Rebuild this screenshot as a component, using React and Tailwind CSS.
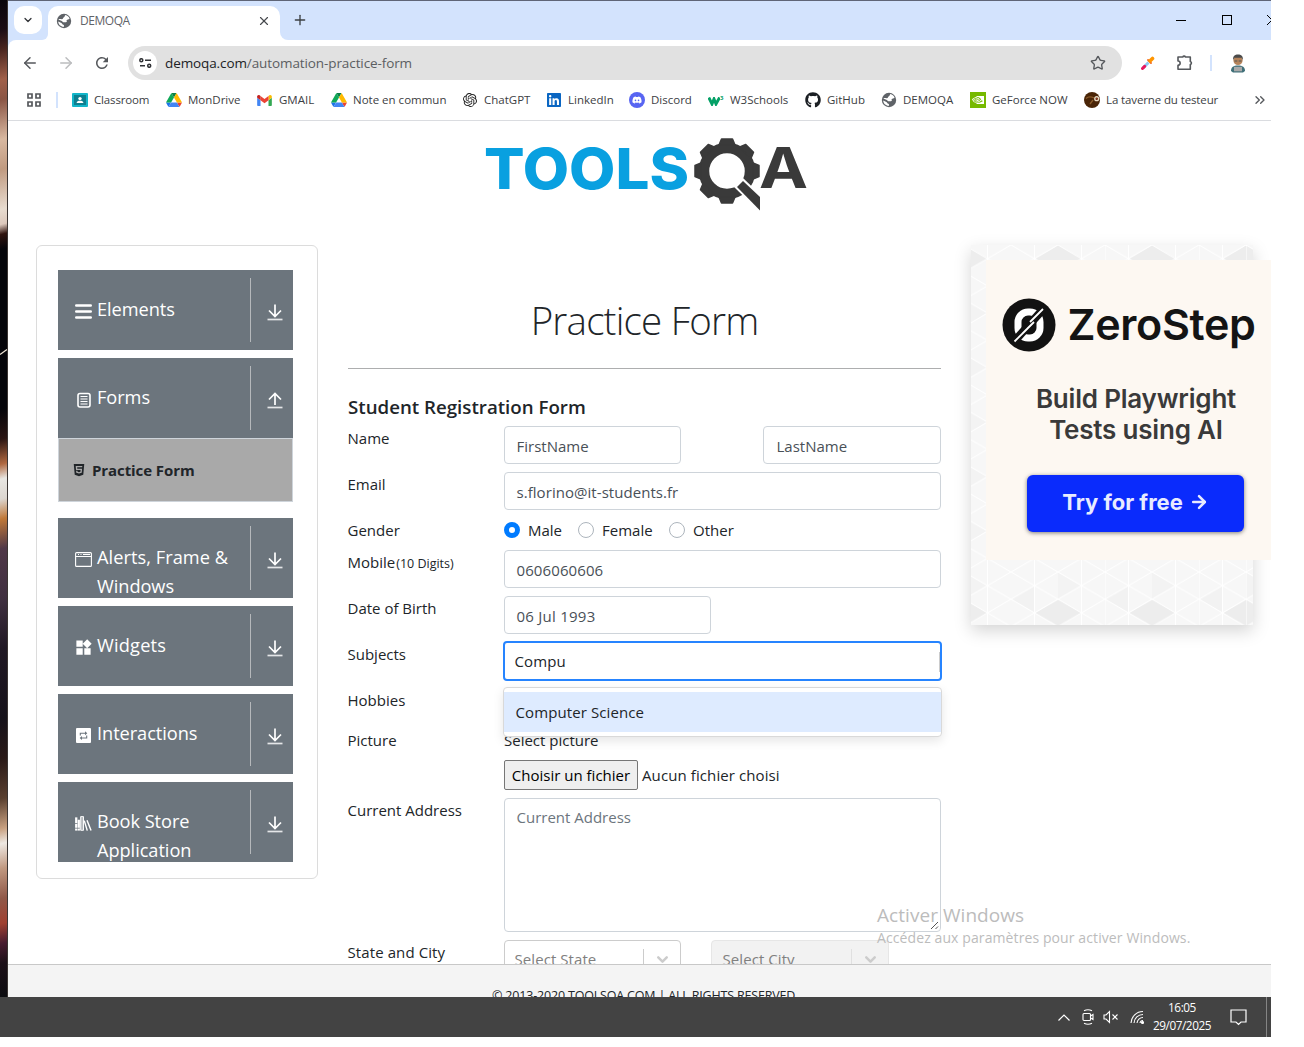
import React from "react";
import { ArrowLeft, ArrowRight, ChevronDown, ChevronsRight, Plus, X, Star } from "lucide-react";
import { MdPublic, MdWidgets, MdRefresh } from "react-icons/md";
import { FaLinkedin, FaDiscord, FaGithub, FaHtml5 } from "react-icons/fa";
import { SiNvidia, SiOpenai } from "react-icons/si";

function DriveIcon() {
  return (
    <svg width="16" height="14" viewBox="0 0 87.3 78">
      <path fill="#1a73e8" d="M6.6 66.85 10.45 73.5c.8 1.4 1.95 2.5 3.3 3.3L27.5 53H0c0 1.55.4 3.1 1.2 4.5z" />
      <path fill="#0fa958" d="M43.65 25 29.9 1.2c-1.35.8-2.5 1.9-3.3 3.3L1.2 48.5A9 9 0 0 0 0 53h27.5z" />
      <path fill="#ea4335" d="M73.55 76.8c1.35-.8 2.5-1.9 3.3-3.3l9.25-16c.8-1.4 1.2-2.95 1.2-4.5H59.8l5.85 11.5z" />
      <path fill="#0b8043" d="M43.65 25 57.4 1.2C56.05.4 54.5 0 52.9 0H34.4c-1.6 0-3.15.45-4.5 1.2z" />
      <path fill="#4285f4" d="M59.8 53H27.5L13.75 76.8c1.35.8 2.9 1.2 4.5 1.2h50.8c1.6 0 3.15-.45 4.5-1.2z" />
      <path fill="#ffba00" d="M73.4 26.5 60.7 4.5c-.8-1.4-1.95-2.5-3.3-3.3L43.65 25 59.8 53h27.45c0-1.55-.4-3.1-1.2-4.5z" />
    </svg>
  );
}

function GmailIcon() {
  return (
    <svg width="15" height="11" viewBox="52 42 88 66">
      <path fill="#4285f4" d="M58 108h14V74L52 59v43c0 3.32 2.69 6 6 6" />
      <path fill="#34a853" d="M120 108h14c3.32 0 6-2.69 6-6V59l-20 15" />
      <path fill="#fbbc04" d="M120 48v26l20-15v-8c0-7.42-8.47-11.65-14.4-7.2" />
      <path fill="#ea4335" d="M72 74V48l24 18 24-18v26L96 92" />
      <path fill="#c5221f" d="M52 51v8l20 15V48l-5.6-4.2c-5.94-4.45-14.4-.22-14.4 7.2" />
    </svg>
  );
}

function ClassroomIcon() {
  return (
    <svg width="16" height="14" viewBox="0 0 16 14">
      <rect width="16" height="14" rx="1" fill="#12b5c9" />
      <rect x="2" y="2" width="12" height="10" fill="#0c7f90" />
      <circle cx="8" cy="5.6" r="1.7" fill="#fff" />
      <path d="M4.6 10c0-1.7 1.6-2.2 3.4-2.2s3.4.5 3.4 2.2z" fill="#fff" />
    </svg>
  );
}

function W3Icon() {
  return (
    <span className="flex w-4 items-start text-[#04a066]">
      <svg width="12" height="9" viewBox="0 0 12 9" className="mt-0.5 shrink-0" fill="none" stroke="#04a066" strokeWidth="2.9">
        <path d="M.8.5 4 7l2-5 2 5L11.6.5" />
      </svg>
      <span className="text-[6px] leading-[6px] font-bold">3</span>
    </span>
  );
}

function TavernIcon() {
  return (
    <svg width="16" height="16" viewBox="0 0 16 16">
      <circle cx="8" cy="8" r="8" fill="#4a2507" />
      <path d="M2 6.5c2-2 5-2 8-.6M6 12l3-4" stroke="#8a5a2a" strokeWidth="1.3" fill="none" />
      <circle cx="12.7" cy="6.7" r="1.9" fill="none" stroke="#e9d8c0" strokeWidth="1.4" />
      <circle cx="12.7" cy="6.7" r=".7" fill="#b03020" />
    </svg>
  );
}

function GlobeIcon() {
  return (
    <svg width="16" height="16" viewBox="0 0 16 16">
      <circle cx="8" cy="8" r="7.200" fill="#5f6368" />
      <path d="M9.300 2.100c2 .3 3.600 1.600 4.300 3.500-.9 1.300-2.700 1-3.200 2 .8.700.6 1.700-.6 1.700H7.900c-.8 0-1.300-.7-2-1.400L2.300 6.600c.7-.6 2-.6 3.400-.4 1.500.2 1-1.400 2.200-1.900 1.100-.4.6-1.400 1.400-2.200z" fill="#fff" />
      <path d="M2.200 8.600 5.400 10c.9.400.8 1.500 1.900 1.700.9.200.8 1.200.4 2.200C4.700 13.800 2.300 11.500 2.200 8.600z" fill="#fff" />
    </svg>
  );
}

const bookmarks = [
  { label: "Classroom", w: "w-[94px]", t: "tracking-[-0.16px]", icon: <ClassroomIcon /> },
  { label: "MonDrive", w: "w-[91px]", t: "", icon: <DriveIcon /> },
  { label: "GMAIL", w: "w-[74px]", t: "", icon: <GmailIcon /> },
  { label: "Note en commun", w: "w-[131px]", t: "", icon: <DriveIcon /> },
  { label: "ChatGPT", w: "w-[84px]", t: "", icon: <SiOpenai className="ml-px size-[14px] text-[#222]" /> },
  { label: "LinkedIn", w: "w-[83px]", t: "", icon: <FaLinkedin className="size-4 text-[#0a66c2]" /> },
  { label: "Discord", w: "w-[79px]", t: "", icon: <span className="flex size-4 items-center justify-center rounded-full bg-[#5865f2]"><FaDiscord className="size-[10px] text-white" /></span> },
  { label: "W3Schools", w: "w-[97px]", t: "", icon: <W3Icon /> },
  { label: "GitHub", w: "w-[76px]", t: "", icon: <FaGithub className="size-4 text-[#1b1f24]" /> },
  { label: "DEMOQA", w: "w-[89px]", t: "", icon: <GlobeIcon /> },
  { label: "GeForce NOW", w: "w-[114px]", t: "", icon: <span className="flex size-4 items-center justify-center bg-[#76b900]"><SiNvidia className="size-3 text-white" /></span> },
  { label: "La taverne du testeur", w: "w-[168px]", t: "tracking-[-0.12px]", icon: <TavernIcon /> },
];

function BrowserChrome() {
  return (
    <div className="shrink-0 border-b border-[#dadce0] bg-[#d3e3fd]">
      <div className="h-px bg-[#5f6577]" />
      <div className="flex h-[39px] items-end">
        <div className="mb-1.5 ml-1.5 flex size-7 items-center justify-center rounded-[10px] bg-white">
          <ChevronDown className="size-3 text-[#303236]" strokeWidth={2.5} />
        </div>
        <div className="h-2 w-1.5 bg-white"><div className="size-full rounded-br-lg bg-[#d3e3fd]" /></div>
        <div className="flex h-[34px] w-[232px] items-center rounded-t-[10px] bg-white pb-[5px] pl-2 pr-[9px]">
          <GlobeIcon />
          <span className="ml-2 flex-1 text-[12px] tracking-[-0.45px] text-[#5f6368]">DEMOQA</span>
          <X className="size-3.5 text-[#474a4e]" />
        </div>
        <div className="h-2 w-2 bg-white"><div className="size-full rounded-bl-lg bg-[#d3e3fd]" /></div>
        <div className="mb-3 ml-1 flex-1"><Plus className="size-4 text-[#3c4043]" /></div>
        <div className="flex h-[39px] w-[95px] shrink-0 items-center overflow-hidden pb-px">
          <div className="h-px w-2.5 shrink-0 bg-black" />
          <div className="ml-9 size-2.5 shrink-0 border border-black" />
          <svg width="10" height="10" viewBox="0 0 10 10" className="ml-[35px] shrink-0" stroke="#000" strokeWidth="1"><path d="M0 0l10 10M10 0L0 10" /></svg>
        </div>
      </div>
      <div className="flex h-[46px] items-center rounded-tl-lg bg-white">
        <ArrowLeft className="ml-[13px] size-[18px] text-[#55585c]" />
        <ArrowRight className="ml-[18px] size-[18px] text-[#bcbdbf]" />
        <MdRefresh className="ml-[18px] size-[18px] text-[#55585c]" />
        <div className="ml-[17px] flex h-[34px] w-[994px] items-center rounded-full bg-[#e1e1e1] pl-[5px] pr-4">
          <span className="flex size-6 items-center justify-center rounded-full bg-white">
            <svg width="13" height="10" viewBox="0 0 13 10" fill="none" stroke="#303236" strokeWidth="1.5">
              <circle cx="2.3" cy="2.2" r="1.5" /><path d="M6 2.2h6M1 7.8h5" /><circle cx="10.2" cy="7.8" r="1.5" />
            </svg>
          </span>
          <span className="ml-2 flex-1 text-[13.5px] tracking-[-0.1px] text-[#5b5e62]"><span className="text-[#202124]">demoqa.com</span>/automation-practice-form</span>
          <Star className="size-4 text-[#55585c]" />
        </div>
        <svg width="14" height="14" viewBox="0 0 14 14" className="ml-[19px]">
          <path d="M2 12 7.5 6.5" stroke="#8fc8f2" strokeWidth="3" />
          <path d="M1.5 12.5 3.6 10.4" stroke="#e8175d" strokeWidth="3" strokeLinecap="round" />
          <path d="M7 4l3 3" stroke="#f0641e" strokeWidth="1.8" strokeLinecap="round" />
          <path d="M9.2 4.8l2.3-2.3" stroke="#ff9500" strokeWidth="3.6" strokeLinecap="round" />
        </svg>
        <svg width="18" height="18" viewBox="0 0 18 18" className="ml-[21px]" fill="none" stroke="#55585c" strokeWidth="1.6">
          <path d="M2 3h4.800a1.400 1.400 0 0 1 2.600 0h4.900v4.600a1.500 1.500 0 0 1 0 2.900v4.700H2v-3.900a2 2 0 0 0 0-4.300z" strokeLinejoin="round" />
        </svg>
        <div className="ml-4 h-4 w-0.5 bg-[#d3e3fd]" />
        <svg width="16" height="19" viewBox="0 0 16 19" className="ml-[18px]">
          <path d="M1 17c0-4 2.500-5.500 7-5.500s7 1.500 7 5.500l-2 1.500H3z" fill="#3f6f78" />
          <circle cx="8" cy="6.500" r="4.600" fill="#b5835a" />
          <path d="M3.300 6C2.500 2 5 .5 8 .5S13.500 2 12.700 6l-1.200-2.300h-7z" fill="#4a4a4a" />
          <path d="M4.500 7h2.800m1.400 0h2.800" stroke="#555" />
          <rect x="4" y="12.800" width="8" height="4.500" fill="#a9a9a9" />
        </svg>
      </div>
      <div className="flex h-[34px] items-center bg-white pb-1.5 text-[11.5px] text-[#3c4043]">
        <svg width="14" height="14" viewBox="0 0 14 14" className="ml-[19px]" fill="none" stroke="#55585c" strokeWidth="1.7">
          <path d="M1 1h4v4H1zM9 1h4v4H9zM1 9h4v4H1zM9 9h4v4H9z" />
        </svg>
        <div className="ml-[15px] mr-[14px] h-4 w-0.5 bg-[#d3e3fd]" />
        {bookmarks.map((b) => (
          <div key={b.label} className={"flex shrink-0 items-center whitespace-nowrap " + b.w}>
            <span className="flex w-[22px] shrink-0">{b.icon}</span>
            <span className={b.t}>{b.label}</span>
          </div>
        ))}
        <ChevronsRight className="size-4 text-[#55585c]" />
      </div>
    </div>
  );
}

function Logo() {
  const teeth = [0, 45, 90, 180, 225, 270, 315];
  return (
    <svg width="340" height="90" viewBox="0 0 340 90" className="ml-[470px] mt-3 block">
      <text x="6" y="55.500" fontFamily="Inter, sans-serif" fontWeight="800" fontSize="57" fill="#09a0e0" textLength="205" lengthAdjust="spacingAndGlyphs">TOOLS</text>
      <g transform="translate(249 38)">
        <circle r="23" fill="none" stroke="#3a3a3a" strokeWidth="10.500" />
        {teeth.map((a) => (
          <path key={a} d="M-8-26-5.500-32H5.500L8-26z" fill="#3a3a3a" stroke="#3a3a3a" strokeWidth="1.500" strokeLinejoin="round" transform={`rotate(${a})`} />
        ))}
        <path d="M7 16 16 7 40 30V48z" fill="#fff" />
        <path d="M10 16 16 10 33 26V39.500z" fill="#3a3a3a" />
      </g>
      <text x="281" y="55" fontFamily="Inter, sans-serif" fontWeight="700" fontSize="57" fill="#3a3a3a" textLength="49" lengthAdjust="spacingAndGlyphs">A</text>
    </svg>
  );
}

function BarsIcon() {
  return (
    <svg width="17" height="15" viewBox="0 0 17 15" stroke="#fff" strokeWidth="2.600" strokeLinecap="round">
      <path d="M1.300 1.500h14.400M1.300 7.500h14.400M1.300 13.500h14.400" />
    </svg>
  );
}

function FormsIcon() {
  return (
    <svg width="14" height="16" viewBox="0 0 14 16" fill="none" stroke="#fff">
      <rect x="1" y="1.500" width="12" height="13.500" rx="2" strokeWidth="1.600" />
      <path d="M3.500 4.500h7M3.500 7h7M3.500 9.500h7M3.500 12h7" strokeWidth="1.200" />
    </svg>
  );
}

function WindowIcon() {
  return (
    <svg width="17" height="15" viewBox="0 0 17 15" fill="none" stroke="#fff">
      <rect x=".6" y=".6" width="15.800" height="13.800" rx="1" strokeWidth="1.100" />
      <path d="M1 4.500h15M3 2.500h1M5.500 2.500h1M8 2.500h7" strokeWidth="1.200" />
    </svg>
  );
}

function RepeatBoxIcon() {
  return (
    <svg width="15" height="15" viewBox="0 0 15 15">
      <rect width="15" height="15" rx="1" fill="#fff" />
      <path d="M4.300 7.500V5.300H9.500M10.700 7.500v2.500H5.500" fill="none" stroke="#6c757d" strokeWidth="1.100" />
      <path d="M9 3.300l2.300 2L9 7.300zM6 8v4L3.700 10z" fill="#6c757d" />
    </svg>
  );
}

function BooksIcon() {
  return (
    <svg width="18" height="17" viewBox="0 0 18 17" fill="none" stroke="#fff">
      <path d="M1.300 2v14" strokeWidth="2.400" />
      <path d="M4 4.500v11.500" strokeWidth="2.400" />
      <path d="M6 1.200h3v14.500H6z" fill="#fff" fillOpacity=".5" strokeWidth="1" />
      <path d="M9.800 5.500 13 16M12.700 5 17 16" strokeWidth="1.500" />
      <path d="M0 13.500h5M0 8.500h2.500" stroke="#6c757d" strokeWidth=".8" />
    </svg>
  );
}

function MenuItem({ icon, children, open }) {
  return (
    <div className="flex h-20 overflow-hidden bg-[#6c757d] py-2 text-white">
      <div className="flex w-[192px] shrink-0 pl-[17px] pt-[17px]">
        <span className="flex h-[30px] w-[17px] shrink-0 items-center justify-center pt-[3px]">{icon}</span>
        <span className="ml-[5px] whitespace-nowrap text-[18.200px] leading-[29px] tracking-[-0.05px]">{children}</span>
      </div>
      <div className="flex h-16 flex-1 items-center justify-center border-l border-[#b5b8bb] pl-1.5 pt-1">
        <svg width="16" height="17" viewBox="0 0 16 17" fill="none" stroke="#fff" strokeWidth="1.700">
          <path d={open ? "M8 13V2M2 7.500l6-6 6 6" : "M8 .5V12M2 6.500l6 6 6-6"} />
          <path d="M.5 15.500h15" stroke="#e4e6e8" />
        </svg>
      </div>
    </div>
  );
}

function Sidebar() {
  return (
    <div className="h-[634px] w-[282px] shrink-0 rounded-md border border-[#dcdcdc] pl-[21px] pr-6 pt-6">
      <div className="flex flex-col gap-2">
        <MenuItem icon={<BarsIcon />}>Elements</MenuItem>
        <div className="pb-2">
          <MenuItem open icon={<FormsIcon />}>Forms</MenuItem>
          <div className="flex h-16 items-center border border-[#ced4da] bg-[#a9a9a9] pl-[13px] text-[15px] font-bold text-[#212529]">
            <FaHtml5 className="mr-1.5 size-[14px]" />
            <span className="tracking-[-0.08px]">Practice Form</span>
          </div>
        </div>
        <MenuItem icon={<WindowIcon />}><span className="tracking-[0.05px]">Alerts, Frame &amp;</span><br />Windows</MenuItem>
        <MenuItem icon={<MdWidgets className="size-[19px] shrink-0" />}><span className="tracking-[0.2px]">Widgets</span></MenuItem>
        <MenuItem icon={<RepeatBoxIcon />}>Interactions</MenuItem>
        <MenuItem icon={<BooksIcon />}>Book Store<br />Application</MenuItem>
      </div>
    </div>
  );
}

function Row({ label, h, children }) {
  return (
    <div className={"flex shrink-0 " + h}>
      <div className="-ml-[0.5px] w-[156.5px] shrink-0 leading-6">{label}</div>
      {children}
    </div>
  );
}

function Field({ w, children }) {
  return (
    <div className={"flex h-[38px] shrink-0 items-center rounded border border-[#ced4da] bg-white pl-[11.500px] pt-[3px] text-[#495057] " + w}>{children}</div>
  );
}

function Radio({ checked, children, className }) {
  return (
    <div className={"flex h-6 items-center " + className}>
      {checked
        ? <span className="size-4 rounded-full border-[5px] border-[#007bff] bg-white" />
        : <span className="size-4 rounded-full border border-[#adb5bd] bg-white" />}
      <span className="ml-2">{children}</span>
    </div>
  );
}

function SelectBox({ children, disabled }) {
  return (
    <div className={disabled
      ? "flex h-[38px] w-[178px] items-center rounded border border-[#e6e6e6] bg-[#f2f2f2] pl-[10.500px] text-[#808080]"
      : "flex h-[38px] w-[177px] items-center rounded border border-[#ccc] bg-white pl-[9.500px] text-[#808080]"}>
      <span className="flex-1 tracking-[0.07px]">{children}</span>
      <span className={disabled ? "h-5 w-px bg-[#e0e0e0]" : "h-5 w-px bg-[#ccc]"} />
      <span className="flex w-9 justify-center"><ChevronDown className="size-[17px] text-[#ccc]" strokeWidth={3.5} /></span>
    </div>
  );
}

function RegistrationForm() {
  return (
    <div className="ml-[30px] w-[593px] shrink-0 text-[15px] text-[#212529]">
      <h1 className="h-[124px] border-b border-[#adaeaf] pt-[47px] text-center text-[38.500px] leading-[56px] font-light tracking-[-0.8px]">Practice Form</h1>
      <h5 className="mb-[7px] mt-[26px] text-[18.700px] leading-6 font-semibold">Student Registration Form</h5>
      <Row label="Name" h="h-[46px]">
        <Field w="w-[177px]">FirstName</Field>
        <div className="w-[82px] shrink-0" />
        <Field w="w-[178px]"><span className="pl-px">LastName</span></Field>
      </Row>
      <Row label="Email" h="h-[46px]"><Field w="w-[437px]"><span className="tracking-[0.05px]">s.florino@it-students.fr</span></Field></Row>
      <Row label="Gender" h="h-8">
        <Radio checked className="w-[74px]">Male</Radio>
        <Radio className="w-[91px]">Female</Radio>
        <Radio>Other</Radio>
      </Row>
      <Row label={<>Mobile<span className="ml-px text-[12.500px]">(10 Digits)</span></>} h="h-[46px]"><Field w="w-[437px]"><span className="tracking-[0.1px]">0606060606</span></Field></Row>
      <Row label="Date of Birth" h="h-[46px]"><Field w="w-[207px]"><span className="tracking-[0.25px]">06 Jul 1993</span></Field></Row>
      <Row label="Subjects" h="h-[46px]">
        <div className="relative -ml-px -mt-px flex h-10 w-[439px] shrink-0 items-center rounded border-2 border-[#2684ff] pl-[9.500px] pt-px">
          <span className="flex-1 tracking-[0.1px]">Compu</span>
          <span className="h-5 w-px bg-[#ccc]" />
          <div className="absolute -left-0.5 top-[44px] z-10 flex h-[50px] w-[439px] items-center rounded border border-[#d9d9d9] bg-white shadow-[0_4px_11px_rgba(0,0,0,0.1)]">
            <div className="flex h-10 w-full items-center bg-[#deebff] pl-[11.500px] pt-px tracking-[0.1px]">Computer Science</div>
          </div>
        </div>
      </Row>
      <Row label="Hobbies" h="h-10" />
      <Row label="Picture" h="h-[70px]">
        <div>
          <div className="mb-2 leading-6">Select picture</div>
          <div className="flex items-center">
            <button className="h-[30px] w-[134px] whitespace-nowrap rounded-[2px] border border-[#767676] bg-[#efefef] text-black">Choisir un fichier</button>
            <span className="ml-1 tracking-[0.1px]">Aucun fichier choisi</span>
          </div>
        </div>
      </Row>
      <Row label="Current Address" h="h-[142px]">
        <div className="flex h-[134px] w-[437px] shrink-0 justify-between rounded border border-[#ced4da] pl-[11.500px] pt-1.5 leading-6 text-[#6c757d]">
          Current Address
          <svg width="9" height="9" viewBox="0 0 9 9" className="mb-px mr-px self-end" stroke="#555"><path d="M1 8l7-7M5.500 8 8 5.500" /></svg>
        </div>
      </Row>
      <Row label={<span className="tracking-[0.1px]">State and City</span>} h="h-[38px]">
        <SelectBox>Select State</SelectBox>
        <div className="w-[30px]" />
        <SelectBox disabled>Select City</SelectBox>
      </Row>
    </div>
  );
}

function TrianglePattern() {
  const cells = [0, 94, 188, 282];
  const rows = [0, 54.5, 109, 163.5, 218, 272.5, 327];
  return (
    <svg width="282" height="380" viewBox="0 0 282 380" className="absolute inset-0">
      <defs>
        <pattern id="tri" width="47" height="27.25" patternUnits="userSpaceOnUse" x="-7">
          <path d="M0 0v27.25M23.500 0v27.250M0 0 47 27.250M47 0 0 27.250" stroke="#fff" strokeWidth="1" />
        </pattern>
      </defs>
      <rect width="282" height="380" fill="#f7f7f7" />
      {rows.map((y, j) => cells.map((x) => (
        <g key={x + "-" + y}>
          <path d={`M${x - 7} ${y} l23.500 13.600 -23.500 13.600z`} fill="#f3f3f3" />
          <path d={`M${x + 40} ${y + 27.250} l23.500-13.600v27.200z`} fill={j % 2 ? "#f5f5f5" : "#f2f2f2"} />
        </g>
      )))}
      {cells.map((x) => (
        <g key={x} fill="#ededed">
          <path d={`M${x - 30} 13.600 l23.500-13.600 23.500 13.600 -23.500 13.600z`} />
          <path d={`M${x - 30} 368 l23.500-13.600 23.500 13.600 -23.500 13.600z`} />
        </g>
      ))}
      <rect width="282" height="380" fill="url(#tri)" />
    </svg>
  );
}

function ZeroStepAd() {
  return (
    <div className="relative ml-[30px] h-[380px] w-[282px] shrink-0 shadow-[0_6px_16px_rgba(0,0,0,0.17)]">
      <TrianglePattern />
      <div className="relative ml-[15px] mt-[15px] h-[300px] w-[300px] bg-[#fdf8f2] pt-[38px] font-['Inter']">
        <div className="ml-4 flex items-center">
          <svg width="54" height="54" viewBox="0 0 54 54">
            <circle cx="27" cy="27" r="26.500" fill="#121212" />
            <rect x="16" y="14" width="22" height="26" rx="10" fill="none" stroke="#fff" strokeWidth="7" />
            <path d="M10 46 44 8" stroke="#121212" strokeWidth="8" />
            <path d="M12.500 43.500 26 30M28 24 41 11M20 36l12-12" stroke="#fff" strokeWidth="1.800" />
          </svg>
          <span className="ml-[11.500px] whitespace-nowrap pb-0.5 text-[43px] leading-[52px] font-semibold tracking-[-0.35px] text-[#141414]">ZeroStep</span>
        </div>
        <div className="mt-[31px] text-center text-[26px] leading-[31px] font-semibold tracking-[-0.2px] text-[#3a3a3a]">Build Playwright<br />Tests using AI</div>
        <div className="ml-[41px] mt-[30px] flex h-[57px] w-[217px] items-center justify-center rounded-md bg-[#0a2bfc] pb-[3px] text-[22px] font-bold text-[#e8ebff] shadow-[0_1px_4px_rgba(0,0,0,0.5)]">
          Try for free
          <ArrowRight className="ml-1.5 size-5" strokeWidth={3} />
        </div>
      </div>
    </div>
  );
}

function Taskbar() {
  return (
    <div className="flex h-10 items-center justify-end bg-[#434343] text-white">
      <svg width="12" height="7" viewBox="0 0 12 7" fill="none" stroke="#fff" strokeWidth="1.200"><path d="M.5 6.500 6 1l5.500 5.500" /></svg>
      <svg width="12" height="16" viewBox="0 0 12 16" className="ml-3" fill="none" stroke="#fff" strokeWidth="1.100">
        <path d="M2 1.800Q6-.2 10 1.800M2 14.200q4 2 8 0" />
        <rect x="1" y="4.500" width="7.500" height="7" rx="1" />
        <path d="M8.500 7l2.500-1.500v5L8.500 9z" />
      </svg>
      <svg width="16" height="14" viewBox="0 0 16 14" className="ml-[9px]" fill="none" stroke="#fff" strokeWidth="1.100">
        <path d="M1 5h2l3.500-3.500v11L3 9H1zM9.500 4.500l5 5M14.500 4.500l-5 5" />
      </svg>
      <svg width="14" height="14" viewBox="0 0 14 14" className="ml-[11px]" fill="none" stroke="#fff" strokeWidth="1.100">
        <path d="M1 13A12 12 0 0 1 13 1.500M4 13a9 9 0 0 1 9-8.500M7 13a6 6 0 0 1 6-5.500" />
        <path d="M10 13a3 3 0 0 1 3-2.500" /><circle cx="12.500" cy="12.500" r="1" fill="#fff" />
      </svg>
      <div className="ml-2 mr-px w-[60px] pb-[3px] text-center text-[11.800px] leading-[18px] tracking-[-0.45px]"><div>16:05</div><div>29/07/2025</div></div>
      <svg width="17" height="17" viewBox="0 0 17 17" className="ml-[17px]" fill="none" stroke="#fff" strokeWidth="1.200"><path d="M1 1h15v12h-5l-2.500 2.500L6 13H1z" /></svg>
      <div className="ml-[19px] mr-1 h-full w-px bg-[#858585]" />
    </div>
  );
}

export default function App() {
  return (
    <div className="h-[1047px] w-[1304px] bg-white font-['Open_Sans',sans-serif]">
      <div className="relative flex h-[1037px] w-[1271px] flex-col overflow-hidden">
        <div className="flex h-[997px]">
          <div className="w-2 shrink-0 border-r border-[#3b3533] bg-[linear-gradient(165deg,#08050a_0%,#1a0c14_3%,#4a2620_5%,#a0604a_8%,#8a5545_10%,#d8b8a0_14%,#c09a80_17%,#e8dcd0_21%,#dcc8bc_22.500%,#30140f_23.500%,#05050a_25%,#05050a_41%,#2a1512_44%,#b06840_46.500%,#e8e6e2_48%,#dcd6d0_50%,#c07838_52%,#503848_55%,#403040_60%,#201824_65%,#16121a_72%,#2a1a18_76%,#5a4030_80%,#c8a080_83%,#eee8e2_84.500%,#c09880_87%,#905848_90%,#a04030_92.500%,#481c30_94.500%,#1c1018_96.500%,#0c0c10_100%)] pt-[348px]">
            <svg width="7" height="8" viewBox="0 0 7 8" className="block" stroke="#f0e6d8" strokeWidth="1.200"><path d="M0 6.500 7 1.500" /></svg>
          </div>
          <div className="flex w-[1263px] shrink-0 flex-col overflow-hidden bg-white">
            <BrowserChrome />
            <div className="h-[843px] shrink-0 overflow-hidden">
              <div className="h-[124px] overflow-hidden"><Logo /></div>
              <div className="flex items-start pl-7">
                <Sidebar />
                <RegistrationForm />
                <ZeroStepAd />
              </div>
            </div>
            <div className="h-[33px] shrink-0 overflow-hidden border-t border-[#c8c8c8] bg-[#f4f4f4] pl-[484px] pt-[21px] text-[12.500px] leading-[19px] tracking-[-0.18px] text-[#212529]">© 2013-2020 TOOLSQA.COM | ALL RIGHTS RESERVED.</div>
          </div>
        </div>
        <Taskbar />
        <div className="absolute left-[877px] top-[902px] text-[#bcbcbc]">
          <div className="text-[19px] leading-[26px] tracking-[0.05px]">Activer Windows</div>
          <div className="text-[14px] leading-[19px] tracking-[0.1px]">Accédez aux paramètres pour activer Windows.</div>
        </div>
      </div>
    </div>
  );
}
